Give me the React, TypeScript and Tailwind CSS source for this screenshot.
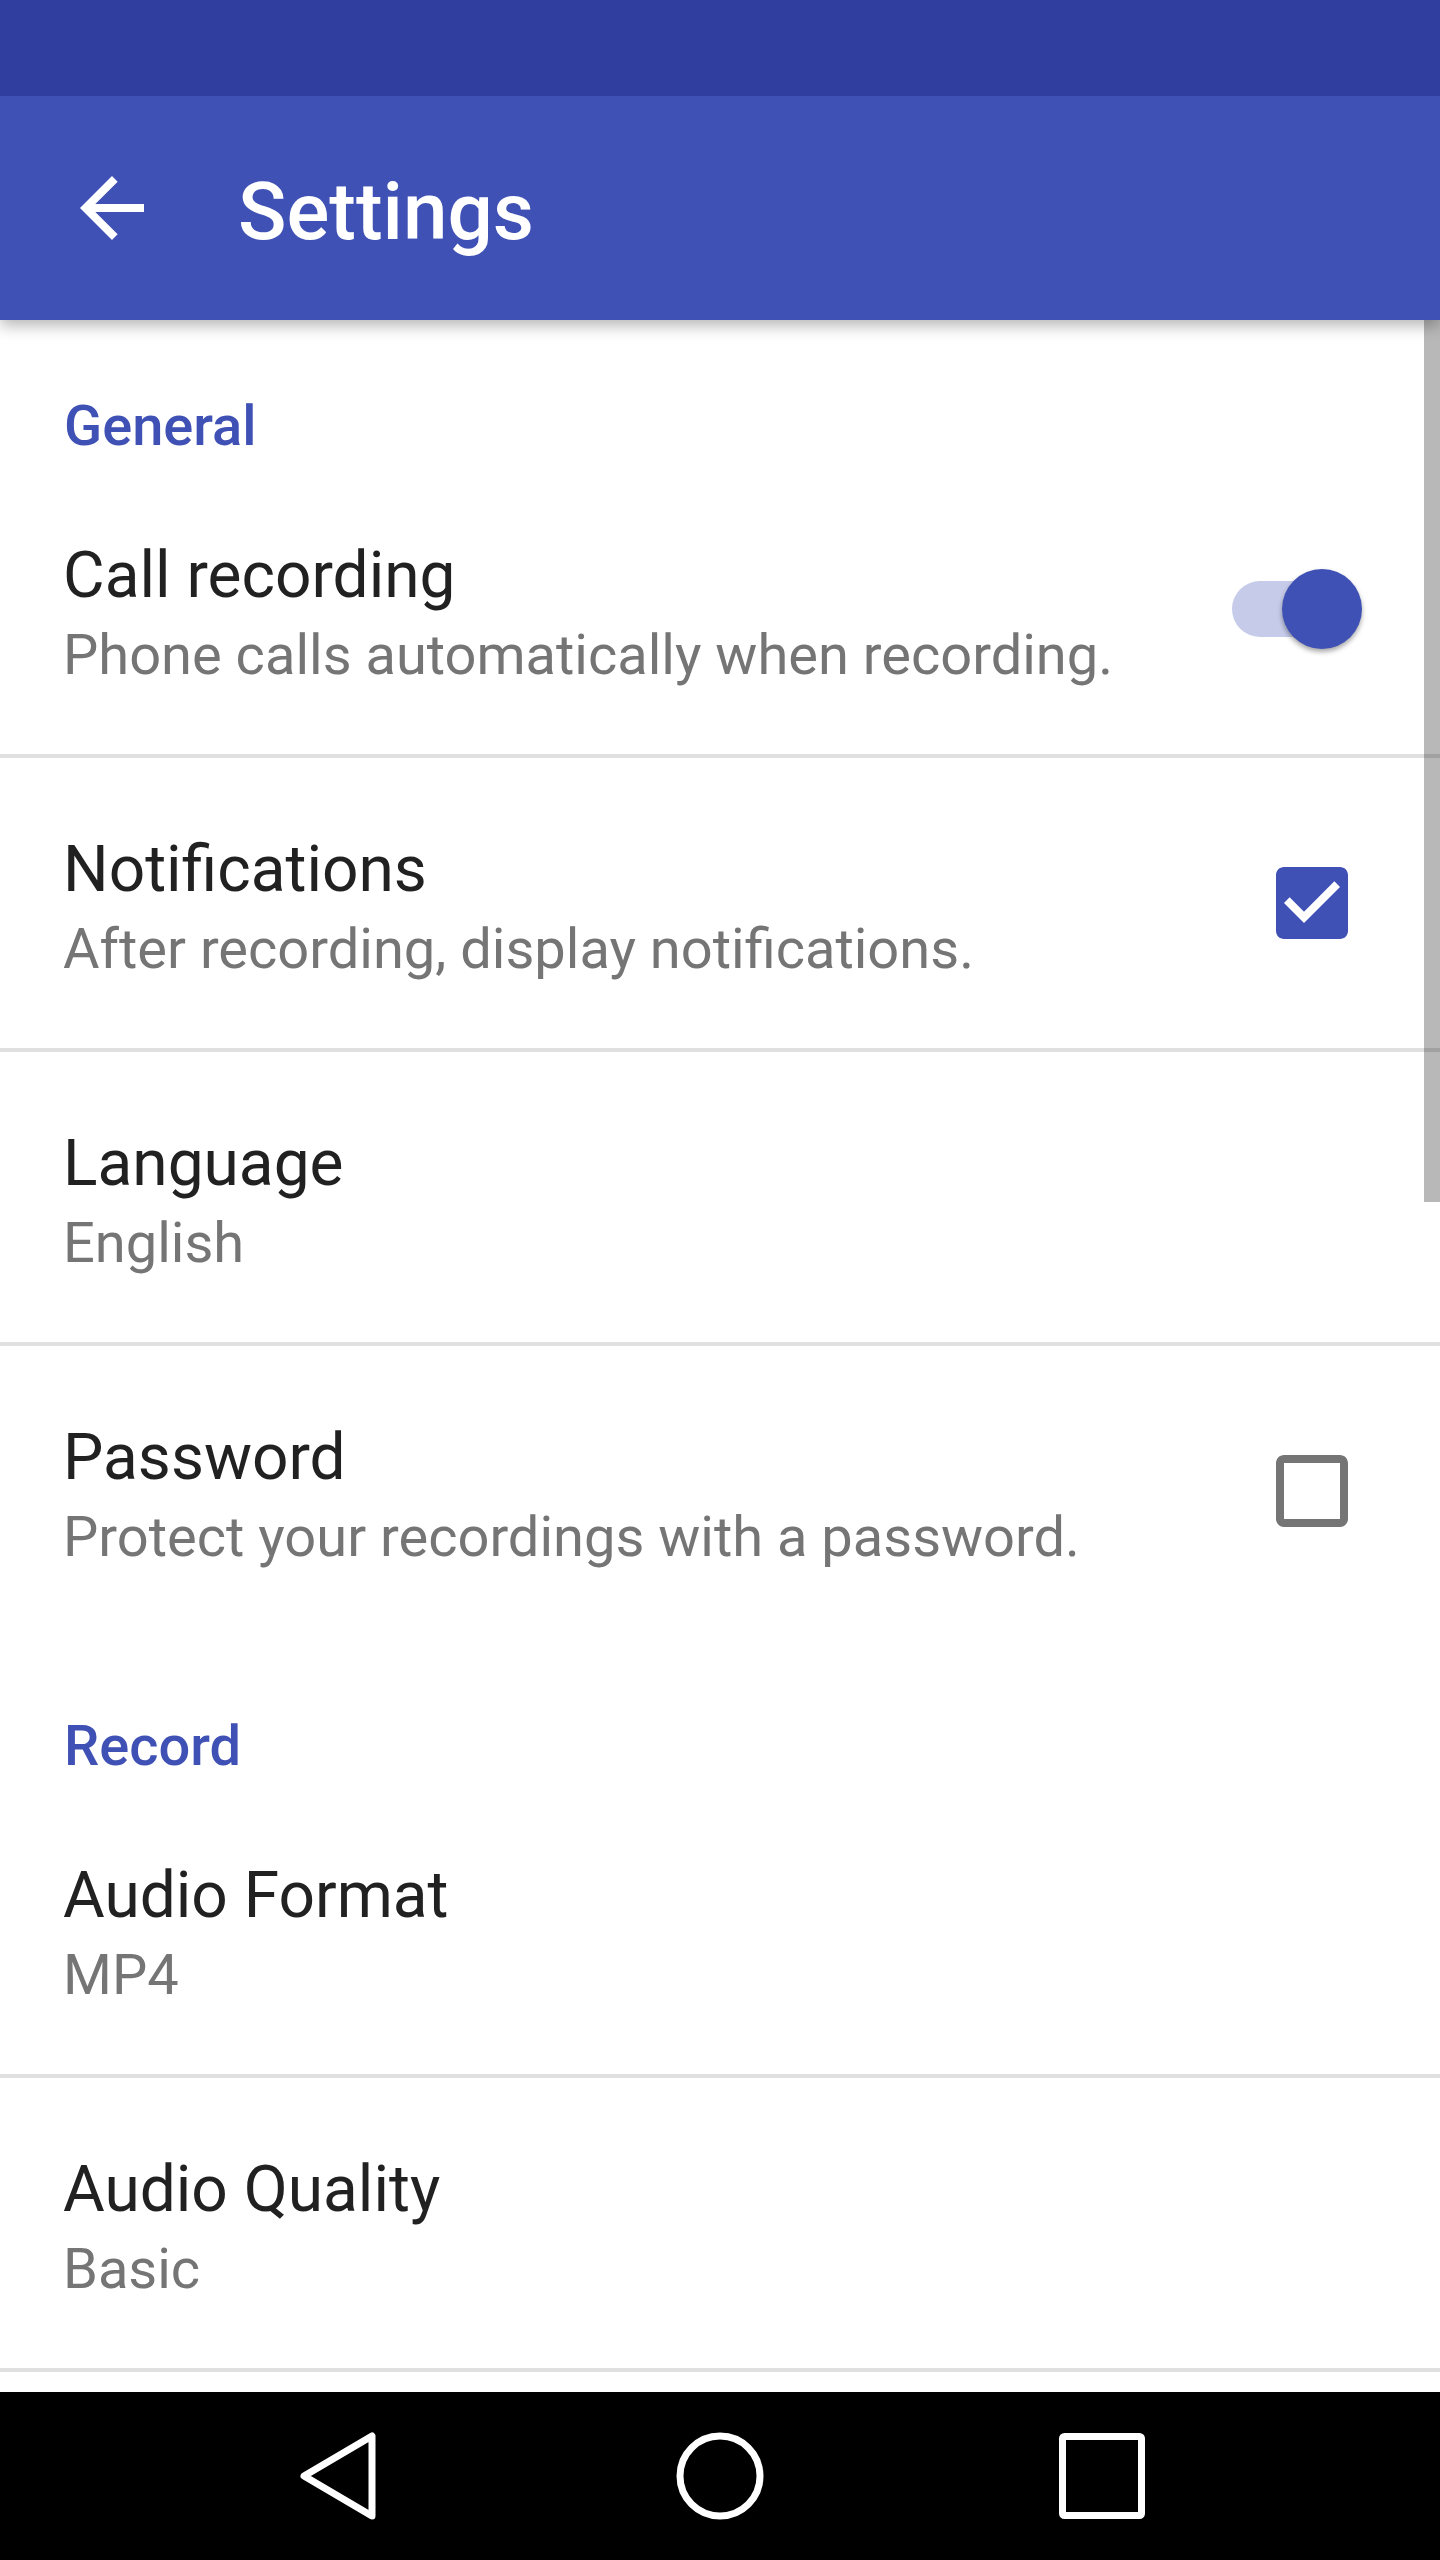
import React, { useState } from 'react';

type Pref = {
  title: string;
  summary: string;
  control?: 'switch' | 'checkbox';
  divider: boolean;
};

const general: Pref[] = [
  { title: 'Call recording', summary: 'Phone calls automatically when recording.', control: 'switch', divider: true },
  { title: 'Notifications', summary: 'After recording, display notifications.', control: 'checkbox', divider: true },
  { title: 'Language', summary: 'English', divider: true },
  { title: 'Password', summary: 'Protect your recordings with a password.', control: 'checkbox', divider: false },
];

const record: Pref[] = [
  { title: 'Audio Format', summary: 'MP4', divider: true },
  { title: 'Audio Quality', summary: 'Basic', divider: true },
];

const Toggle = ({ on, onClick }: { on: boolean; onClick: () => void }) => (
  <button onClick={onClick} className="relative w-[130px] h-[80px] -mr-[2px] shrink-0">
    <span className={`absolute left-0 top-[12px] w-[124px] h-[56px] rounded-full ${on ? 'bg-[#c5cbe9]' : 'bg-[#bdbdbd]'}`} />
    <span
      className={`absolute top-0 w-[80px] h-[80px] rounded-full shadow-[0_3px_5px_rgba(0,0,0,0.35)] ${on ? 'right-0 bg-[#3f51b5]' : 'left-0 bg-[#fafafa]'}`}
    />
  </button>
);

const CheckBox = ({ checked, onClick }: { checked: boolean; onClick: () => void }) => (
  <button onClick={onClick} className="w-[96px] h-[96px] shrink-0">
    {checked ? (
      <svg viewBox="0 0 24 24" width="96" height="96">
        <path
          fill="#3f51b5"
          d="M19 3H5c-1.11 0-2 .9-2 2v14c0 1.1.89 2 2 2h14c1.11 0 2-.9 2-2V5c0-1.1-.89-2-2-2zm-9 14l-5-5 1.41-1.41L10 14.17l7.59-7.59L19 8l-9 9z"
        />
      </svg>
    ) : (
      <svg viewBox="0 0 24 24" width="96" height="96">
        <path
          fill="#757575"
          d="M19 5v14H5V5h14m0-2H5c-1.1 0-2 .9-2 2v14c0 1.1.9 2 2 2h14c1.1 0 2-.9 2-2V5c0-1.1-.9-2-2-2z"
        />
      </svg>
    )}
  </button>
);

const App = () => {
  const [values, setValues] = useState<Record<string, boolean>>({
    'Call recording': true,
    Notifications: true,
    Password: false,
  });

  const toggle = (key: string) => setValues(prev => ({ ...prev, [key]: !prev[key] }));

  const renderRow = (pref: Pref) => (
    <div
      key={pref.title}
      className={`flex items-center pl-[63px] pr-[80px] ${pref.divider ? 'h-[294px] border-b-4 border-[#e0e0e0]' : 'h-[290px]'}`}
    >
      <div className="flex-1 self-start pt-[74px] flex flex-col">
        <span className="text-[64px] leading-[75px] text-[#212121]">{pref.title}</span>
        <span className="mt-[9px] text-[56px] leading-[66px] text-[#757575]">{pref.summary}</span>
      </div>
      {pref.control === 'switch' && <Toggle on={values[pref.title]} onClick={() => toggle(pref.title)} />}
      {pref.control === 'checkbox' && <CheckBox checked={values[pref.title]} onClick={() => toggle(pref.title)} />}
    </div>
  );

  return (
    <div className="w-[1440px] h-[2560px] flex flex-col bg-white overflow-hidden font-['Roboto',sans-serif]">
      {/* status bar */}
      <div className="relative z-20 h-[96px] bg-[#303f9f] shrink-0" />

      {/* toolbar */}
      <div className="relative z-10 h-[224px] shrink-0 flex items-center bg-[#3f51b5] shadow-[0_6px_14px_rgba(0,0,0,0.28)]">
        <button className="ml-[64px] w-[96px] h-[96px]">
          <svg viewBox="0 0 24 24" width="96" height="96">
            <path fill="#ffffff" d="M20 11H7.83l5.59-5.59L12 4l-8 8 8 8 1.41-1.41L7.83 13H20v-2z" />
          </svg>
        </button>
        <h1 className="ml-[78px] pt-[8px] text-[80px] leading-[94px] font-medium text-white">Settings</h1>
      </div>

      {/* preference list */}
      <div className="relative flex-1 overflow-hidden">
        <div className="pt-[73px] pb-[5px] pl-[64px] text-[56px] leading-[66px] font-medium text-[#3f51b5]">General</div>
        {general.map(renderRow)}
        <div className="pt-[77px] pb-[5px] pl-[64px] text-[56px] leading-[66px] font-medium text-[#3f51b5]">Record</div>
        {record.map(renderRow)}

        {/* scroll indicator */}
        <div className="absolute right-0 top-0 w-[16px] h-[882px] bg-[rgba(0,0,0,0.28)]" />
      </div>

      {/* navigation bar */}
      <div className="h-[168px] shrink-0 bg-black flex items-center justify-center gap-[282px]">
        <svg viewBox="0 0 100 100" width="100" height="100">
          <polygon points="16,50 84,10 84,90" fill="none" stroke="#ffffff" strokeWidth="7" strokeLinejoin="round" />
        </svg>
        <svg viewBox="0 0 100 100" width="100" height="100">
          <circle cx="50" cy="50" r="40" fill="none" stroke="#ffffff" strokeWidth="7" />
        </svg>
        <svg viewBox="0 0 100 100" width="100" height="100">
          <rect x="10.5" y="10.5" width="79" height="79" rx="2" fill="none" stroke="#ffffff" strokeWidth="7" />
        </svg>
      </div>
    </div>
  );
};

export default App;
